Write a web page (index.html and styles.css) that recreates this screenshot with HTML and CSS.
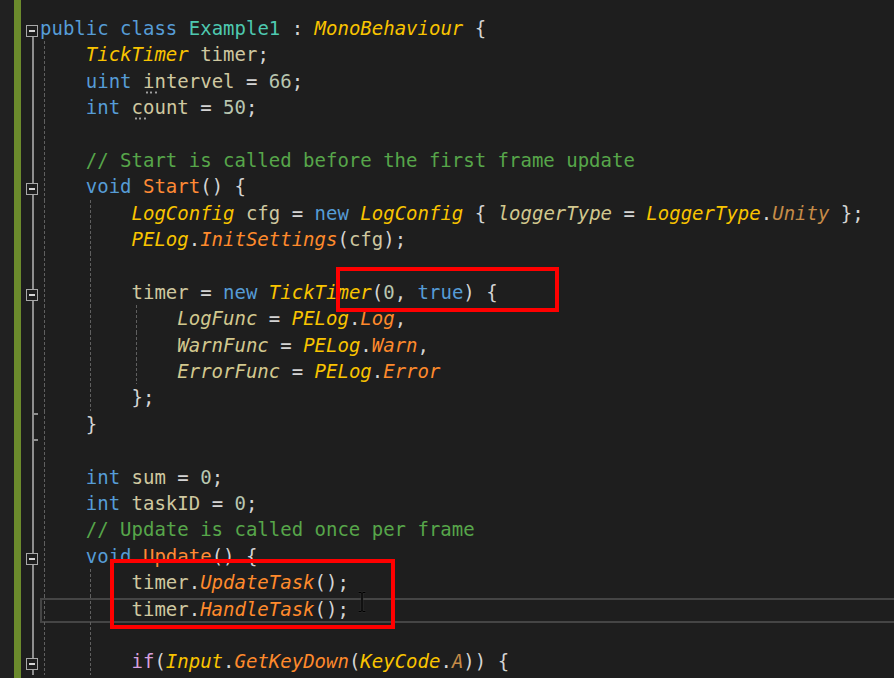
FILE: index.html
```html
<!DOCTYPE html>
<html lang="en">
<head>
<meta charset="utf-8">
<title>Example1.cs</title>
<link rel="stylesheet" href="styles.css">
</head>
<body>
<div class="editor">
  <div class="margin-strip"></div>
  <div class="change-bar"></div>
  <div class="lines">
    <div class="line"><span class="fold first"><span class="box"></span></span><span class="code"><span class="k">public</span> <span class="k">class</span> <span class="c">Example1</span> : <span class="t">MonoBehaviour</span> {</span></div>
    <div class="line"><span class="fold"></span><span class="code g1">    <span class="t">TickTimer</span> <span class="v">timer</span>;</span></div>
    <div class="line"><span class="fold"></span><span class="code g1">    <span class="k">uint</span> <span class="v"><span class="hint">in</span>tervel</span> = <span class="n">66</span>;</span></div>
    <div class="line"><span class="fold"></span><span class="code g1">    <span class="k">int</span> <span class="v"><span class="hint">co</span>unt</span> = <span class="n">50</span>;</span></div>
    <div class="line"><span class="fold"></span><span class="code g1"> </span></div>
    <div class="line"><span class="fold"></span><span class="code g1">    <span class="cm">// Start is called before the first frame update</span></span></div>
    <div class="line"><span class="fold"><span class="box"></span></span><span class="code g1">    <span class="k">void</span> <span class="m">Start</span>() {</span></div>
    <div class="line"><span class="fold"></span><span class="code g2">        <span class="t">LogConfig</span> <span class="v">cfg</span> = <span class="k">new</span> <span class="t">LogConfig</span> { <span class="p">loggerType</span> = <span class="t">LoggerType</span>.<span class="e">Unity</span> };</span></div>
    <div class="line"><span class="fold"></span><span class="code g2">        <span class="t">PELog</span>.<span class="mi">InitSettings</span>(<span class="v">cfg</span>);</span></div>
    <div class="line"><span class="fold"></span><span class="code g2"> </span></div>
    <div class="line"><span class="fold"><span class="box"></span></span><span class="code g2">        <span class="v">timer</span> = <span class="k">new</span> <span class="t">TickTimer</span>(<span class="n">0</span>, <span class="k">true</span>) {</span></div>
    <div class="line"><span class="fold"></span><span class="code g3">            <span class="p">LogFunc</span> = <span class="t">PELog</span>.<span class="mi">Log</span>,</span></div>
    <div class="line"><span class="fold"></span><span class="code g3">            <span class="p">WarnFunc</span> = <span class="t">PELog</span>.<span class="mi">Warn</span>,</span></div>
    <div class="line"><span class="fold"></span><span class="code g3">            <span class="p">ErrorFunc</span> = <span class="t">PELog</span>.<span class="mi">Error</span></span></div>
    <div class="line"><span class="fold"></span><span class="code g2">        };</span></div>
    <div class="line"><span class="fold end"></span><span class="code g1">    }</span></div>
    <div class="line"><span class="fold"></span><span class="code g1"> </span></div>
    <div class="line"><span class="fold"></span><span class="code g1">    <span class="k">int</span> <span class="v">sum</span> = <span class="n">0</span>;</span></div>
    <div class="line"><span class="fold"></span><span class="code g1">    <span class="k">int</span> <span class="v">taskID</span> = <span class="n">0</span>;</span></div>
    <div class="line"><span class="fold"></span><span class="code g1">    <span class="cm">// Update is called once per frame</span></span></div>
    <div class="line"><span class="fold"><span class="box"></span></span><span class="code g1">    <span class="k">void</span> <span class="m">Update</span>() {</span></div>
    <div class="line"><span class="fold"></span><span class="code g2">        <span class="v">timer</span>.<span class="mi">UpdateTask</span>();</span></div>
    <div class="line"><span class="fold"></span><span class="code g2 current">        <span class="v">timer</span>.<span class="mi">HandleTask</span>();</span></div>
    <div class="line"><span class="fold"></span><span class="code g2"> </span></div>
    <div class="line"><span class="fold"><span class="box"></span></span><span class="code g2">        <span class="ctl">if</span>(<span class="t">Input</span>.<span class="mi">GetKeyDown</span>(<span class="t">KeyCode</span>.<span class="e">A</span>)) {</span></div>
  </div>
  <div class="callout c1"></div>
  <div class="callout c2"></div>
  <svg class="ibeam" width="10" height="22" viewBox="0 0 10 22">
    <path d="M1.5 1.5 H4.5 M5.5 1.5 H8.5 M5 2 V20 M1.5 20.5 H4.5 M5.5 20.5 H8.5" stroke="#3a3a3a" stroke-width="2.6" fill="none"/>
    <path d="M1.5 1.5 H4.5 M5.5 1.5 H8.5 M5 2 V20 M1.5 20.5 H4.5 M5.5 20.5 H8.5" stroke="#000000" stroke-width="1.4" fill="none"/>
  </svg>
</div>
</body>
</html>
```

FILE: styles.css
```css
html, body {
  margin: 0;
  padding: 0;
  background: #1e1e1e;
  overflow: hidden;
}

.editor {
  position: relative;
  display: flex;
  width: 894px;
  height: 678px;
  overflow: hidden;
  background: #1e1e1e;
}

.margin-strip {
  flex: none;
  width: 14px;
  background: #212121;
}

.change-bar {
  flex: none;
  width: 7px;
  background: #6b8a2c;
}

.lines {
  flex: 1;
  padding-top: 15px;
}

.line {
  display: flex;
  height: 26.4px;
}

.fold {
  flex: none;
  position: relative;
  width: 19px;
}

.fold::before {
  content: "";
  position: absolute;
  left: 11px;
  top: 0;
  bottom: 0;
  width: 2px;
  background: #8e8e8e;
}

.fold.first::before {
  top: 14px;
}

.fold.end::after {
  content: "";
  position: absolute;
  left: 11px;
  top: 2px;
  width: 6px;
  height: 24px;
  border-top: 2px solid #8e8e8e;
  border-bottom: 2px solid #8e8e8e;
}

.box {
  position: absolute;
  left: 5px;
  top: 10px;
  width: 10px;
  height: 10px;
  border: 1px solid #a8a8a8;
  background: #1e1e1e;
}

.box::after {
  content: "";
  position: absolute;
  left: 2px;
  right: 2px;
  top: 4px;
  height: 2px;
  background: #d4d4d4;
}

.code {
  flex: 1;
  position: relative;
  white-space: pre;
  font-family: "DejaVu Sans Mono", "Liberation Mono", monospace;
  font-size: 19px;
  line-height: 26.4px;
  color: #d4d4d4;
}

.g1 {
  background:
    repeating-linear-gradient(to bottom, #5f5f5f 0 3px, transparent 3px 5px) 4px 0 / 1px 100% no-repeat;
}

.g2 {
  background:
    repeating-linear-gradient(to bottom, #5f5f5f 0 3px, transparent 3px 5px) 4px 0 / 1px 100% no-repeat,
    repeating-linear-gradient(to bottom, #5f5f5f 0 3px, transparent 3px 5px) 50px 0 / 1px 100% no-repeat;
}

.g3 {
  background:
    repeating-linear-gradient(to bottom, #5f5f5f 0 3px, transparent 3px 5px) 4px 0 / 1px 100% no-repeat,
    repeating-linear-gradient(to bottom, #5f5f5f 0 3px, transparent 3px 5px) 50px 0 / 1px 100% no-repeat,
    repeating-linear-gradient(to bottom, #5f5f5f 0 3px, transparent 3px 5px) 96px 0 / 1px 100% no-repeat;
}

.current::before {
  content: "";
  position: absolute;
  left: 0;
  right: 0;
  top: 2px;
  bottom: -1px;
  border: 2px solid #454545;
  border-right: none;
  pointer-events: none;
}

.hint {
  padding-bottom: 2px;
  background:
    radial-gradient(circle, #a0a0a0 0.9px, transparent 1.3px) 2px 100% / 4px 3px no-repeat,
    radial-gradient(circle, #a0a0a0 0.9px, transparent 1.3px) 6.5px 100% / 4px 3px no-repeat,
    radial-gradient(circle, #a0a0a0 0.9px, transparent 1.3px) 11px 100% / 4px 3px no-repeat;
}

.k { color: #569cd6; }
.c { color: #4ec9b0; }
.t { color: #f9c400; font-style: italic; }
.v { color: #cfc8a0; }
.n { color: #b8c6b0; }
.cm { color: #57a64a; }
.m { color: #ff8a35; }
.mi { color: #ff8a2c; font-style: italic; }
.p { color: #d2c88e; font-style: italic; }
.e { color: #c68c48; font-style: italic; }
.ctl { color: #d8a0df; }

.callout {
  position: absolute;
  box-sizing: border-box;
  border: 4px solid #ff0000;
  pointer-events: none;
}

.c1 {
  left: 336px;
  top: 267px;
  width: 223px;
  height: 45px;
}

.c2 {
  left: 110px;
  top: 559px;
  width: 285px;
  height: 70px;
}

.ibeam {
  position: absolute;
  left: 357px;
  top: 591px;
}
```
